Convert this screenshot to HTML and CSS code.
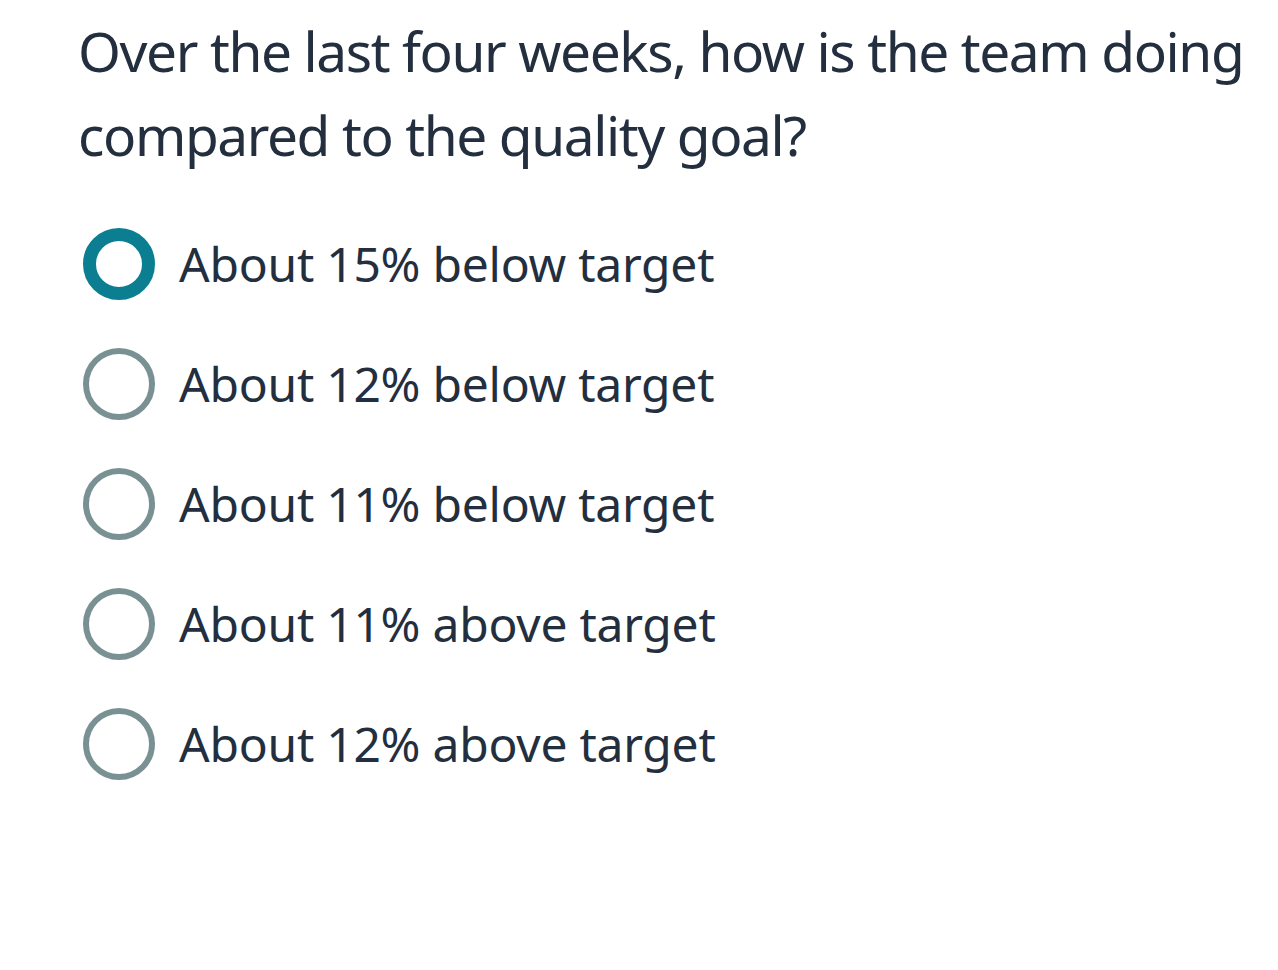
FILE: index.html
```html
<!DOCTYPE html>
<html lang="en">
<head>
<meta charset="utf-8">
<title>Quality goal</title>
<link rel="stylesheet" href="styles.css">
</head>
<body>
<main class="question">
  <h1 class="prompt">Over the last four weeks, how is the team doing compared to the quality goal?</h1>
  <ul class="options">
    <li class="option"><span class="radio radio-selected"></span><span class="label">About 15% below target</span></li>
    <li class="option"><span class="radio"></span><span class="label">About 12% below target</span></li>
    <li class="option"><span class="radio"></span><span class="label">About 11% below target</span></li>
    <li class="option"><span class="radio"></span><span class="label">About 11% above target</span></li>
    <li class="option"><span class="radio"></span><span class="label">About 12% above target</span></li>
  </ul>
</main>
</body>
</html>
```

FILE: styles.css
```css
html, body {
  margin: 0;
  padding: 0;
  background: #ffffff;
}
body {
  font-family: "Noto Sans", "Open Sans", sans-serif;
  color: #232f3e;
}
.question {
  padding: 9px 0 0 78px;
}
.prompt {
  margin: 0;
  font-size: 55px;
  font-weight: 400;
  line-height: 84px;
  letter-spacing: -1.4px;
}
.options {
  list-style: none;
  margin: 27px 0 0 0;
  padding: 0;
}
.option {
  display: flex;
  align-items: center;
  height: 120px;
  gap: 24px;
  padding-left: 5px;
}
.radio {
  box-sizing: border-box;
  width: 72px;
  height: 72px;
  border-radius: 50%;
  border: 6px solid #7a9193;
  flex: none;
}
.radio-selected {
  border: 13px solid #0b7f91;
}
.label {
  font-size: 48px;
  line-height: 60px;
  letter-spacing: -0.25px;
}
```
